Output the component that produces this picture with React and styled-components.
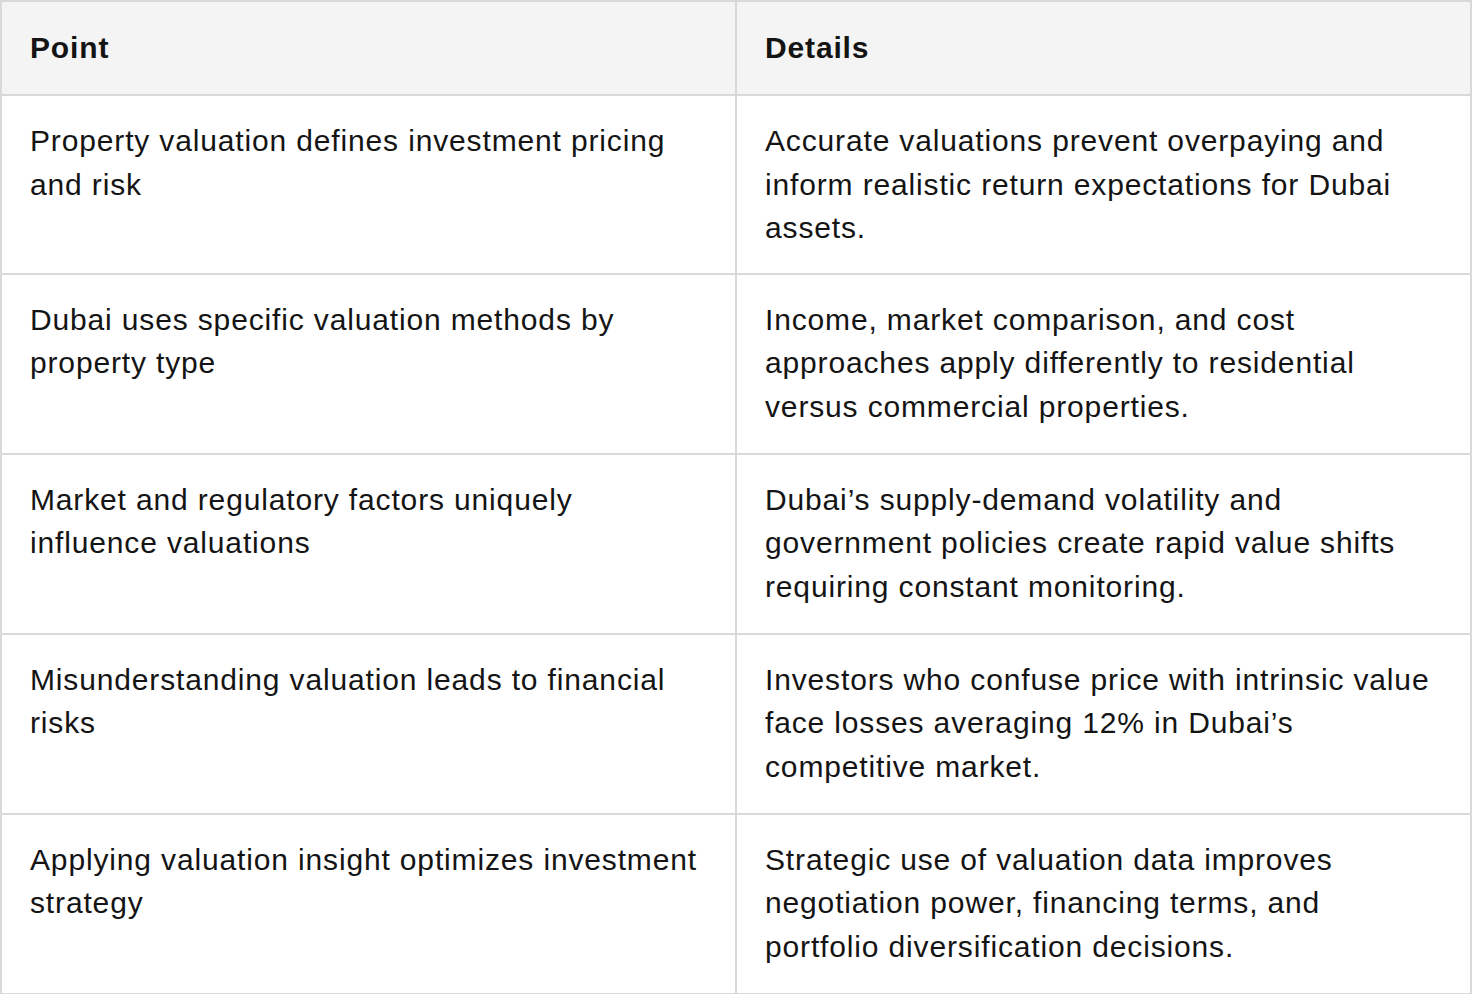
import React from 'react'
import styled, { createGlobalStyle } from 'styled-components'

const GlobalStyle = createGlobalStyle`
  body {
    margin: 0;
    background: #ffffff;
    font-family: "Liberation Sans", Arial, Helvetica, sans-serif;
    color: #141414;
  }
`

const Table = styled.table`
  width: 100%;
  border-collapse: collapse;
  border: 2px solid #d9d9d9;
  font-size: 30px;
  letter-spacing: 0.85px;
  line-height: 43.5px;
  table-layout: fixed;
`

const HeadCell = styled.th`
  background: #f4f4f4;
  font-weight: 700;
  text-align: left;
  padding: 24px 28px 24px 28px;
  border: 2px solid #d9d9d9;
  height: 44px;
`

const Cell = styled.td`
  padding: 23px 28px 23px 28px;
  border: 2px solid #d9d9d9;
  vertical-align: top;
  height: ${props => props.$h || 130}px;
`

const rows = [
  ['Property valuation defines investment pricing and risk', 'Accurate valuations prevent overpaying and inform realistic return expectations for Dubai assets.'],
  ['Dubai uses specific valuation methods by property type', 'Income, market comparison, and cost approaches apply differently to residential versus commercial properties.'],
  ['Market and regulatory factors uniquely influence valuations', 'Dubai\u2019s supply-demand volatility and government policies create rapid value shifts requiring constant monitoring.'],
  ['Misunderstanding valuation leads to financial risks', 'Investors who confuse price with intrinsic value face losses averaging 12% in Dubai\u2019s competitive market.'],
  ['Applying valuation insight optimizes investment strategy', 'Strategic use of valuation data improves negotiation power, financing terms, and portfolio diversification decisions.'],
]

const App = () => {
  return (
    <>
      <GlobalStyle />
      <Table>
        <thead>
          <tr>
            <HeadCell>Point</HeadCell>
            <HeadCell>Details</HeadCell>
          </tr>
        </thead>
        <tbody>
          {rows.map(([point, details], i) => (
            <tr key={i}>
              <Cell $h={i === 0 ? 128 : 132}>{point}</Cell>
              <Cell $h={i === 0 ? 128 : 132}>{details}</Cell>
            </tr>
          ))}
        </tbody>
      </Table>
    </>
  )
}

export default App
